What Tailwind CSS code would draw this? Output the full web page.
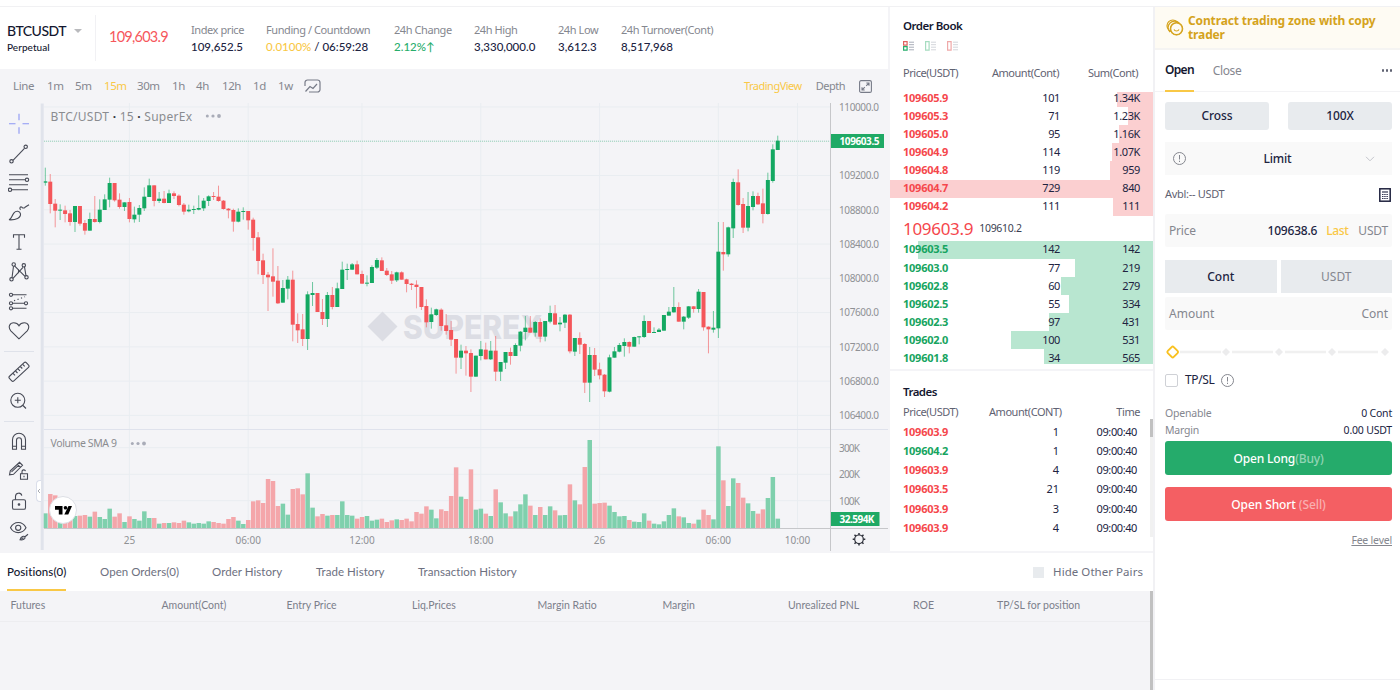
<!DOCTYPE html>
<html lang="en">
<head>
  <meta charset="UTF-8" />
  <title>BTCUSDT Perpetual</title>
  <script src="https://cdn.jsdelivr.net/npm/@tailwindcss/browser@4"></script>
</head>
<body class="w-[1400px] h-[690px] overflow-hidden bg-white flex flex-col font-['Noto_Sans',sans-serif] text-[#20233f]">

  <div class="h-[7px] shrink-0 border-b border-[#f1f1f3]"></div>

  <div class="flex h-[683px]">
    <!-- Left side: chart, order book, positions -->
    <div class="w-[1153px] shrink-0 flex flex-col">
      <div class="flex h-[546px] bg-[#f4f4f7] pb-[2px]">

        <!-- Chart column -->
        <section class="w-[888px] shrink-0 flex flex-col">
          <header class="h-[62px] bg-white flex font-[Lato,sans-serif] leading-none">
            <div class="w-[96px] mt-[8px] h-[46px] border-r border-[#f1f1f4] pl-[7px] pt-[9px]">
              <div class="flex items-center text-[14px] tracking-[-0.5px] whitespace-nowrap text-[#14172f] font-medium">BTCUSDT
                <span class="ml-[8px] border-x-4 border-x-transparent border-t-4 border-t-[#b9babd]"></span>
              </div>
              <div class="mt-[4px] text-[10px] tracking-[0.05px] text-[#14172f] font-medium">Perpetual</div>
            </div>
            <div class="w-[95px] pl-[13px] pt-[23px] text-[14.5px] tracking-[-0.75px] text-[#f6575c]">109,603.9</div>
            <div class="flex pt-[17px] text-[11.5px] whitespace-nowrap [&>div>p:first-child]:text-[#85878f] [&>div>p:first-child]:tracking-[-0.42px] [&>div>p:last-child]:mt-[6px] [&>div>p:last-child]:font-medium">
              <div class="w-[75px]"><p class="font-['Noto_Sans',sans-serif] text-[11px]">Index price</p><p>109,652.5</p></div>
              <div class="w-[128px]"><p class="font-['Noto_Sans',sans-serif] text-[11px]">Funding / Countdown</p><p><span class="text-[#f9c846]">0.0100%</span> / 06:59:28</p></div>
              <div class="w-[80px]"><p class="font-['Noto_Sans',sans-serif] text-[11px]">24h Change</p><p class="text-[#27ad6b]">2.12%↑</p></div>
              <div class="w-[84px]"><p class="font-['Noto_Sans',sans-serif] text-[11px]">24h High</p><p>3,330,000.0</p></div>
              <div class="w-[63px]"><p class="font-['Noto_Sans',sans-serif] text-[11px]">24h Low</p><p>3,612.3</p></div>
              <div><p class="font-['Noto_Sans',sans-serif] text-[11px]">24h Turnover(Cont)</p><p>8,517,968</p></div>
            </div>
          </header>

          <nav class="h-[34px] flex items-center text-[11.5px] tracking-[-0.4px] text-[#85878f] pl-[13px] pr-[16px]">
            <span class="w-[34px]">Line</span>
            <span class="w-[28px]">1m</span>
            <span class="w-[29px]">5m</span>
            <span class="w-[33px] text-[#f9c846]">15m</span>
            <span class="w-[35px]">30m</span>
            <span class="w-[24px]">1h</span>
            <span class="w-[26px]">4h</span>
            <span class="w-[31px]">12h</span>
            <span class="w-[25px]">1d</span>
            <span class="w-[26px]">1w</span>
            <svg class="w-[17px] h-[15px]" viewBox="0 0 17 15" fill="none" stroke="#777b88" stroke-width="1.2"><path d="M1 7V3.5A2.5 2.5 0 0 1 3.500 1h10A2.500 2.500 0 0 1 16 3.500v7a2.500 2.500 0 0 1-2.500 2.500H5M1.500 12.500l4.500-5 3 2 4-4.500"/></svg>
            <span class="ml-auto text-[11px] tracking-[-0.5px] text-[#f9c846]">TradingView</span>
            <span class="ml-[14px] text-[11px] tracking-[-0.5px]">Depth</span>
            <svg class="ml-[14px] w-[13px] h-[13px]" viewBox="0 0 13 13" fill="none" stroke="#777b88" stroke-width="1.100"><rect x=".6" y=".6" width="11.800" height="11.800" rx="1.500"/><path d="M7.200 5.800L10 3M7.300 3H10v2.700M5.800 7.200L3 10M3 7.300V10h2.700"/></svg>
          </nav>

          <div class="flex h-[448px]">
            <!-- Drawing tools -->
            <div class="relative w-[41px] shrink-0 flex flex-col items-center pt-[6px] pr-[3px] [&>svg]:h-[29.6px] [&>svg]:w-[22px] [&>svg]:shrink-0">
              <svg viewBox="0 0 22 22" fill="none" stroke="#8c96f5" stroke-width="1.100"><path d="M11 1v6.500M11 14.500V21M1 11h6.500M14.500 11H21"/></svg>
              <svg viewBox="0 0 22 22" fill="none" stroke="#474a56" stroke-width="1.100"><path d="M5 17.500L16.500 5.500"/><circle cx="3.500" cy="18.500" r="1.700"/><circle cx="17.700" cy="4" r="1.700"/></svg>
              <svg viewBox="0 0 22 22" fill="none" stroke="#474a56" stroke-width="1.100"><path d="M1 3h19M1 8h16M1 13h19M4 18h16"/><circle cx="19" cy="8" r="1.700"/><circle cx="2" cy="18" r="1.700"/></svg>
              <svg viewBox="0 0 22 22" fill="none" stroke="#474a56" stroke-width="1.100"><path d="M1 18c3-1 2.500-4 5-7 2-2.500 6-2 6.500 1C13 16 8 18.500 1 18zM12.500 8c-1.500-2 0-3.500 1.500-2.500 1 1 2 1 3 0L21 3"/></svg>
              <svg viewBox="0 0 22 22" fill="none" stroke="#474a56" stroke-width="1.100"><path d="M5.500 7V4h11v3M11 4v14.500M8.500 18.500h5"/></svg>
              <svg viewBox="0 0 22 22" fill="none" stroke="#474a56" stroke-width="1.100"><path d="M4 17L5.500 5.500M6.500 5l10.500 10.500M5 17.500L15 6.500M16.500 6L18 15M10.500 8.500v4"/><circle cx="3.500" cy="18.500" r="1.700"/><circle cx="5.700" cy="3.700" r="1.700"/><circle cx="15.800" cy="4.500" r="1.700"/><circle cx="18.500" cy="16.500" r="1.700"/></svg>
              <svg viewBox="0 0 22 22" fill="none" stroke="#474a56" stroke-width="1.100"><path d="M4.500 4H18.500M4.500 12.500H17M4.500 17.500H18.500"/><path d="M6 10L17 6" stroke-dasharray="1.200 2.500"/><circle cx="3" cy="4" r="1.600"/><circle cx="3" cy="12.500" r="1.600"/><circle cx="3" cy="17.500" r="1.600"/><circle cx="18" cy="12.500" r="1.600"/></svg>
              <svg viewBox="0 0 22 22" fill="none" stroke="#474a56" stroke-width="1.100"><path d="M11 19L2.800 11C-.5 7 2 3 5.700 3 8.500 3 10.300 4.800 11 6c.7-1.200 2.500-3 5.300-3C20 3 22.500 7 19.200 11z"/></svg>
              <div class="w-[30px] h-px shrink-0 bg-[#dfe2ea] mt-[5px] mb-[5px]"></div>
              <svg viewBox="0 0 22 22" fill="none" stroke="#474a56" stroke-width="1.100"><rect x="-.500" y="7.800" width="23" height="6.400" rx="1.500" transform="rotate(-43 11 11)"/><path d="M5 12.500l2 2M7.500 10.200l2 2M10 8l2 2M12.300 5.700l2 2M14.700 3.600l2 2"/></svg>
              <svg viewBox="0 0 22 22" fill="none" stroke="#474a56" stroke-width="1.100"><circle cx="9.800" cy="10.500" r="7"/><path d="M15 15.700l3 3M9.800 7.500v6M6.800 10.500h6"/></svg>
              <div class="w-[30px] h-px shrink-0 bg-[#dfe2ea] mt-[5px] mb-[5px]"></div>
              <svg viewBox="0 0 22 22" fill="none" stroke="#474a56" stroke-width="1.100"><path d="M4.500 18.500V9a6.500 6.500 0 0 1 13 0v9.500h-4V9.500a2.500 2.500 0 0 0-5 0v9zM4.500 15.500h4M13.500 15.500h4"/></svg>
              <svg viewBox="0 0 22 22" fill="none" stroke="#474a56" stroke-width="1.100"><path d="M1.500 14l.8-4L11.500 1.500l3 3L5.500 13.500zM9.500 3.500l3 3M3.500 11l7-6.500M12.500 13h7v5.500h-7zM14 13v-2a1.800 1.800 0 0 1 3.500-.7M16 15v1.500"/></svg>
              <svg viewBox="0 0 22 22" fill="none" stroke="#474a56" stroke-width="1.100"><rect x="4.500" y="10" width="13" height="9.500" rx="1.500"/><path d="M7.500 10V6.500a3.200 3.200 0 0 1 6.300-.7"/><circle cx="11" cy="14.700" r=".8" fill="#474a56"/></svg>
              <svg viewBox="0 0 22 22" fill="none" stroke="#474a56" stroke-width="1.100"><path d="M2.500 8C6 1 14.500 1 18 8 14.500 14.500 6 14.500 2.500 8z"/><circle cx="10.200" cy="8" r="2.600"/><path d="M12 20c1-3.500 4-4.500 5-2.500.5 1.500-2 3-5 2.500zM13.500 19l2-1M17 17l3-2.500"/></svg>
              <div class="absolute right-0 top-[377px] w-[5px] h-[22px] rounded-l border border-r-0 border-[#dadeea] bg-white flex items-center">
                <svg class="w-[4px] h-[6px]" viewBox="0 0 4 6" fill="none" stroke="#9598a1" stroke-width=".8"><path d="M3 1L1 3l2 2"/></svg>
              </div>
            </div>
            <!-- Candles and volume -->
            <svg id="chart" class="w-[847px] h-[448px] overflow-visible" viewBox="41 103 847 448" font-family="'Noto Sans', sans-serif"></svg>
          </div>
        </section>

        <!-- Order book and trades -->
        <section class="ml-[2px] w-[263px] flex flex-col gap-[2px]">
          <div class="h-[362px] bg-white">
            <h2 class="pl-[13px] pt-[11px] text-[11.5px] leading-[15px] tracking-[-0.5px] font-semibold text-[#14172f]">Order Book</h2>
            <div class="flex gap-[11px] pl-[13px] mt-[8px]">
              <svg class="w-[11px] h-[10px]" viewBox="0 0 11 10" fill="none"><path d="M.6.600h3.500v3.500H.6z" stroke="#e0615f" stroke-width="1.200"/><path d="M.6 5.600h3.500v3.500H.6z" stroke="#27ad6b" stroke-width="1.200"/><path d="M6 1.200h5M6 3.700h5M6 6.200h5M6 8.800h5" stroke="#a9adb8"/></svg>
              <svg class="w-[11px] h-[10px]" viewBox="0 0 11 10" fill="none"><path d="M.6.600h3.500v8.500H.6z" stroke="#a6dcc0" stroke-width="1.200"/><path d="M6 1.200h5M6 3.700h5M6 6.200h5M6 8.800h5" stroke="#d3d5db"/></svg>
              <svg class="w-[11px] h-[10px]" viewBox="0 0 11 10" fill="none"><path d="M.6.600h3.500v8.500H.6z" stroke="#efa9a9" stroke-width="1.200"/><path d="M6 1.200h5M6 3.700h5M6 6.200h5M6 8.800h5" stroke="#d3d5db"/></svg>
            </div>
            <div class="flex mt-[14px] h-[16px] items-center pl-[13px] text-[11px] tracking-[-0.45px] text-[#5f6272]">
              <span class="w-[86px]">Price(USDT)</span>
              <span class="w-[70px] text-right">Amount(Cont)</span>
              <span class="w-[79px] text-right">Sum(Cont)</span>
            </div>
            <div id="asks" class="mt-[11px] h-[123.700px] overflow-hidden flex flex-col justify-end"></div>
            <div class="flex items-center h-[25px] pt-[2px] pl-[13px]">
              <span class="text-[17px] tracking-[-0.3px] text-[#f5474c]">109603.9</span>
              <span class="ml-[6px] text-[10.5px] tracking-[-0.3px] text-[#3c3f52]">109610.2</span>
            </div>
            <div id="bids" class="h-[123px] overflow-hidden"></div>
          </div>
          <div class="relative h-[180px] bg-white">
            <h2 class="pl-[13px] pt-[13px] text-[11.5px] leading-[15px] tracking-[-0.55px] font-semibold text-[#14172f]">Trades</h2>
            <div class="flex mt-[5px] mb-[2.500px] h-[16px] items-center pl-[13px] text-[11px] tracking-[-0.45px] text-[#5f6272]">
              <span class="w-[86px]">Price(USDT)</span>
              <span class="w-[71px] whitespace-nowrap text-right">Amount(CONT)</span>
              <span class="w-[80px] text-right">Time</span>
            </div>
            <div id="trades"></div>
            <div class="absolute right-0 top-[48px] w-[3px] h-[118px] bg-[#f1f1f1]"><div class="h-[18px] bg-[#c1c1c1]"></div></div>
          </div>
        </section>
      </div>

      <!-- Positions -->
      <section class="flex-1 flex flex-col bg-[#f4f4f7] font-[Lato,sans-serif]">
        <div class="h-[38px] bg-white flex items-center pl-[7px] pr-[10px] text-[11.5px] text-[#6d7080] whitespace-nowrap">
          <span class="w-[93px] h-full"><span class="inline-flex items-center h-full pt-[2px] border-b-2 border-[#f9c846] font-medium tracking-[0.05px] text-[#14172f]">Positions(0)</span></span>
          <span class="w-[112px] tracking-[0.05px]">Open Orders(0)</span>
          <span class="w-[104px] tracking-[0.05px]">Order History</span>
          <span class="w-[102px] tracking-[0.05px]">Trade History</span>
          <span class="tracking-[0.05px]">Transaction History</span>
          <span class="ml-auto w-[11px] h-[11px] bg-[#e8ebee]"></span>
          <span class="ml-[9px] font-['Noto_Sans',sans-serif] tracking-[0.05px]">Hide Other Pairs</span>
        </div>
        <div class="flex flex-1">
          <div class="flex-1">
            <div class="h-[31px] flex items-center pl-[10.500px] border-b border-[#ededf0] text-[10.5px] text-[#7c7f8b] whitespace-nowrap">
              <span class="w-[151px]">Futures</span>
              <span class="w-[125px]">Amount(Cont)</span>
              <span class="w-[125.500px]">Entry Price</span>
              <span class="w-[125.500px]">Liq.Prices</span>
              <span class="w-[125px]">Margin Ratio</span>
              <span class="w-[125.500px]">Margin</span>
              <span class="w-[125px]">Unrealized PNL</span>
              <span class="w-[84px]">ROE</span>
              <span>TP/SL for position</span>
            </div>
          </div>
          <div class="w-[3px] bg-[#c1c1c1]"></div>
        </div>
      </section>
    </div>

    <!-- Order form -->
    <aside class="w-[247px] border-l-2 border-[#f1f1f4] flex flex-col">
      <div class="h-[43px] bg-[#fefbf3] border-b-2 border-[#f5f4f2] flex items-center pl-[11px] text-[#d5a31c]">
        <svg class="w-[18px] h-[17px] shrink-0" viewBox="0 0 18 17" fill="none" stroke="#d5a31c" stroke-width="1.200"><path d="M4 13.200A6.200 6.200 0 1 1 13.200 4"/><circle cx="10.500" cy="9.800" r="6.200"/><circle cx="6.800" cy="6.800" r="5.800"/><circle cx="10.500" cy="9.800" r="5.800" fill="#fefbf3"/><path d="M8 10.500c1 2 4 2 5 0"/></svg>
        <p class="ml-[4px] text-[12px] leading-[14px] tracking-[-0.13px] font-bold">Contract trading zone with copy trader</p>
      </div>
      <div class="h-[42px] flex items-stretch pl-[10px] pr-[8px] border-b border-[#f3f3f5] text-[12px]">
        <span class="flex items-center border-b-2 border-[#f9c846] -mb-px tracking-[-0.7px] font-semibold text-[#14172f]">Open</span>
        <span class="ml-[19px] flex items-center tracking-[-0.4px] text-[#85878f]">Close</span>
        <span class="ml-auto flex items-center gap-[1.500px] [&>i]:w-[2.500px] [&>i]:h-[2.500px] [&>i]:rounded-full [&>i]:bg-[#5f6272]"><i></i><i></i><i></i></span>
      </div>
      <div class="pl-[10px] pr-[8px] flex flex-col">
        <div class="mt-[10px] flex justify-between h-[28px] text-[12px] font-medium">
          <div class="w-[104px] rounded-[3px] bg-[#e8ebee] flex items-center justify-center tracking-[-0.1px]">Cross</div>
          <div class="w-[104px] rounded-[3px] bg-[#e8ebee] flex items-center justify-center tracking-[-0.1px]">100X</div>
        </div>
        <div class="mt-[12px] h-[33px] bg-[#f9f9f9] flex items-center pl-[8px] pr-[17px] text-[12px] font-medium">
          <svg class="w-[13px] h-[13px]" viewBox="0 0 13 13" fill="none" stroke="#85878f" stroke-width="1"><circle cx="6.500" cy="6.500" r="6"/><path d="M6.500 3v4.500M6.500 8.700v1.300"/></svg>
          <span class="flex-1 text-center pl-[4px] tracking-[-0.2px]">Limit</span>
          <svg class="w-[10px] h-[6px]" viewBox="0 0 10 6" fill="none" stroke="#c3c5cb"><path d="M1 .8l4 4 4-4"/></svg>
        </div>
        <div class="h-[39px] flex items-center justify-between text-[11px] tracking-[-0.3px] text-[#5f6272]">
          <span>Avbl:-- USDT</span>
          <svg class="mr-px w-[12px] h-[14px]" viewBox="0 0 12 14" fill="none" stroke="#20233f"><rect x=".8" y=".8" width="10.400" height="12.400" stroke-width="1.500"/><path d="M3 4h6" stroke-width="1.100"/><path d="M3 6.500h6M3 8.500h6M3 10.500h6" stroke-width=".9" stroke-dasharray="1.500 .7"/></svg>
        </div>
        <div class="h-[33px] rounded-[2px] bg-[#f9f9f9] flex items-center px-[4px] text-[12px] tracking-[-0.2px] text-[#85878f]">
          <span>Price</span>
          <span class="ml-auto text-[#20233f] font-medium">109638.6</span>
          <span class="ml-[9px] tracking-[-0.4px] font-medium text-[#f9c846]">Last</span>
          <span class="ml-[10px]">USDT</span>
        </div>
        <div class="mt-[13px] h-[33px] flex gap-[4px] text-[12px]">
          <div class="flex-1 bg-[#e8ebee] flex items-center justify-center font-medium">Cont</div>
          <div class="flex-1 bg-[#e8ebee] flex items-center justify-center text-[#85878f]">USDT</div>
        </div>
        <div class="mt-[4px] h-[33px] rounded-[2px] bg-[#f9f9f9] flex items-center justify-between px-[4px] text-[12px] text-[#85878f]">
          <span>Amount</span><span>Cont</span>
        </div>
        <svg class="mt-[14px] w-[227px] h-[16px]" viewBox="0 0 227 16" fill="none">
          <path d="M15 8h41M67 8h41M120 8h41M173 8h40" stroke="#f0f0f0" stroke-width="2.500"/>
          <path d="M61 4l4 4-4 4-4-4zM114 4l4 4-4 4-4-4zM167 4l4 4-4 4-4-4zM220 4l4 4-4 4-4-4z" fill="#ececed"/>
          <rect x="3.500" y="3.800" width="8.400" height="8.400" rx="1.500" transform="rotate(45 7.700 8)" stroke="#f9c120" stroke-width="1.900"/>
        </svg>
        <div class="mt-[11px] h-[18px] flex items-center text-[12px] tracking-[-0.4px]">
          <span class="w-[13px] h-[13px] border border-[#cfd1d6] rounded-[2px]"></span>
          <span class="ml-[7px]">TP/SL</span>
          <svg class="ml-[7px] w-[13px] h-[13px]" viewBox="0 0 13 13" fill="none" stroke="#85878f" stroke-width="1"><circle cx="6.500" cy="6.500" r="6"/><path d="M6.500 3v4.500M6.500 8.700v1.300"/></svg>
        </div>
        <div class="mt-[16px] text-[10.5px] leading-[16.500px] tracking-[-0.2px] text-[#85878f]">
          <div class="flex justify-between"><span>Openable</span><span class="text-[#20233f]">0 Cont</span></div>
          <div class="flex justify-between"><span>Margin</span><span class="text-[#20233f]">0.00 USDT</span></div>
        </div>
        <div class="mt-[3px] h-[34px] rounded-[3px] bg-[#25ab6b] flex items-center justify-center pt-px text-[12px] tracking-[-0.15px] font-medium text-white">Open Long<span class="text-white/50">(Buy)</span></div>
        <div class="mt-[12px] h-[34px] rounded-[3px] bg-[#f45f63] flex items-center justify-center pt-px text-[12px] tracking-[-0.1px] font-medium text-white">Open Short&nbsp;<span class="text-white/50">(Sell)</span></div>
        <div class="mt-[12px] text-right text-[10.5px] tracking-[-0.2px] text-[#85878f] underline">Fee level</div>
      </div>
      <div class="mt-auto mb-[10px] h-px bg-[#f1f1f4]"></div>
    </aside>
  </div>

  <script>
    // price, amount, sum, depth bar width
    const asks = [
      ['109605.9', '101', '1.34K', 36],
      ['109605.3', '71', '1.23K', 25],
      ['109605.0', '95', '1.16K', 34],
      ['109604.9', '114', '1.07K', 41],
      ['109604.8', '119', '959', 43],
      ['109604.7', '729', '840', 263],
      ['109604.2', '111', '111', 40]
    ];
    const bids = [
      ['109603.5', '142', '142', 235],
      ['109603.0', '77', '219', 78],
      ['109602.8', '60', '279', 92],
      ['109602.5', '55', '334', 84],
      ['109602.3', '97', '431', 104],
      ['109602.0', '100', '531', 142],
      ['109601.8', '34', '565', 109]
    ];
    const trades = [
      ['109603.9', '1', 'text-[#f5474c]'],
      ['109604.2', '1', 'text-[#16a460]'],
      ['109603.9', '4', 'text-[#f5474c]'],
      ['109603.5', '21', 'text-[#f5474c]'],
      ['109603.9', '3', 'text-[#f5474c]'],
      ['109603.9', '4', 'text-[#f5474c]']
    ];

    function bookRows(rows, color, bar) {
      return rows.map(r => `
        <div class="relative h-[18.1px] shrink-0 flex items-center pl-[13px] text-[11px]">
          <div class="absolute right-0 inset-y-0 ${bar}" style="width:${r[3]}px"></div>
          <span class="relative w-[86px] font-bold tracking-[-0.25px] ${color}">${r[0]}</span>
          <span class="relative w-[71px] text-right tracking-[-0.4px]">${r[1]}</span>
          <span class="relative w-[80px] text-right tracking-[-0.4px]">${r[2]}</span>
        </div>`).join('');
    }
    document.getElementById('asks').innerHTML = bookRows(asks, 'text-[#f5474c]', 'bg-[#fbcfd0]');
    document.getElementById('bids').innerHTML = bookRows(bids, 'text-[#16a460]', 'bg-[#b8e6d0]');
    document.getElementById('trades').innerHTML = trades.map(t => `
      <div class="h-[19.2px] flex items-center pl-[13px] text-[11px]">
        <span class="w-[86px] font-bold tracking-[-0.25px] ${t[2]}">${t[0]}</span>
        <span class="w-[70px] text-right">${t[1]}</span>
        <span class="w-[78px] text-right tracking-[-0.4px]">09:00:40</span>
      </div>`).join('');

    // candles: side, body top, body bottom, high, low (thirds of a pixel below the block's own top)
    const blocks = [
      [100, 'g 244 248 203 257|r 245 312 222 340|r 311 332 297 382|g 329 331 313 360|r 331 342 317 367|r 340 366 330 377|g 318 366 318 396|r 318 371 318 377|r 369 392 360 404|g 357 392 338 392|r 357 366 288 368|g 329 366 298 370|g 298 330 283 330|g 249 299 233 322|r 249 301 249 305|r 299 321 280 326|g 307 321 307 333|r 306 357 294 367|g 344 358 320 368|g 324 344 315 366|g 290 325 262 333|g 256 291 236 291|r 256 303 256 319|g 296 303 276 309|r 296 309 273 310|g 280 309 269 309|r 280 288 274 297|r 287 315 283 319|r 314 335 309 344|g 329 334 314 337|g 327 329 317 342|g 324 329 286 331|g 302 325 294 333|g 289 303 286 318|r 288 291 276 300|r 290 303 257 305|r 302 327 300 329|r 326 331 324 355'],
      [150, 'r 180 215 176 245|g 185 215 175 217|g 183 186 172 209|r 183 211 183 239|r 209 264 203 302|r 262 333 246 373|r 331 375 311 402|r 374 382 366 483|r 379 395 295 440|r 392 460 348 462|g 414 458 390 458|g 389 416 378 448|r 389 524 362 574|r 522 541 490 579|r 538 567 492 588|g 433 567 424 600|g 429 435 396 468|r 429 486 429 486|r 486 507 447 525|g 435 507 426 531|r 435 471 411 478|g 415 471 398 471|g 359 417 335 417|g 357 360 341 390|g 343 359 339 360|r 343 373 332 373|r 372 401 362 402|g 398 401 376 409|g 351 399 346 399|g 330 353 324 357|r 331 363 322 363|r 362 375 354 378|r 373 392 363 402|g 367 391 365 396|r 367 389 364 389|r 388 402 386 427|r 401 405 399 420|r 404 411 391 475|r 411 471 411 480|r 468 517 448 532|g 493 516 473 536'],
      [240, 'g 208 225 206 228|r 209 258 205 272|r 256 273 222 284|r 270 299 243 318|r 297 353 297 401|g 332 353 314 387|r 332 340 318 407|r 339 410 328 456|g 347 410 347 410|g 328 348 303 361|r 329 358 308 358|g 332 358 303 360|r 332 395 288 423|g 366 395 366 423|g 336 368 336 387|r 336 348 323 374|g 315 348 310 348|g 275 317 273 334|g 263 276 228 301|r 263 278 228 278|g 246 278 243 290|r 246 290 235 307|g 243 290 243 304|g 219 245 197 250|r 220 254 195 254|g 248 253 231 274|g 224 248 222 264|r 224 334 222 340|g 294 335 294 348|r 294 314 277 342|r 312 428 309 459|g 345 428 321 486|r 345 389 324 408|r 388 406 368 418|r 404 454 402 471|g 352 455 344 457|g 334 353 321 353|g 315 335 309 337|g 306 318 295 350|r 306 320 304 340|g 291 320 290 320|g 289 292 288 313|g 243 291 226 294|r 243 279 243 279|g 276 279 262 279'],
      [120, 'g 629 636 624 636|g 585 632 585 632|g 575 587 561 587|g 561 577 501 578|r 561 605 547 605|g 590 605 588 628|g 559 593 558 597|r 559 567 558 578|g 515 567 507 578|r 516 622 516 632|r 620 628 619 700|g 623 629 573 638|g 395 625 306 654|r 396 403 306 452|g 322 403 320 410|g 186 325 176 354|r 187 255 148 257|r 252 323 234 339|g 258 323 216 334|g 228 261 214 271|r 228 253 218 255|r 250 282 206 310|g 180 282 158 284|g 88 183 73 188|g 62 90 47 90']
    ];
    const volumes = [44,102,98,24,24,24,36,37,39,34,49,33,27,58,34,44,18,35,27,22,50,30,30,13,15,15,17,15,22,17,13,15,13,20,18,15,13,27,
      33,22,12,24,80,83,75,147,141,66,73,40,117,119,101,164,61,35,42,37,39,39,80,39,37,28,33,36,22,25,28,18,23,26,24,28,20,48,43,65,55,
      29,56,51,96,182,94,87,176,55,58,43,36,116,77,44,35,50,71,101,67,39,63,39,65,53,38,39,131,83,71,183,264,73,75,76,67,48,35,36,24,19,18,44,22,13,
      11,20,39,59,35,32,15,13,25,55,39,26,245,143,66,149,135,91,74,51,43,56,90,153,28];

    const X0 = 45.3, STEP = 4.949, BASE = 528;
    const times = [[129.4, '25'], [248.2, '06:00'], [362, '12:00'], [480.8, '18:00'], [599.6, '26'], [718.3, '06:00'], [797.5, '10:00']];
    let out = '';

    // grid
    times.forEach(([x, label]) => {
      out += `<path d="M${x} 103V528" stroke="#e9edf1"/><text x="${x}" y="543.500" font-size="10" text-anchor="middle" fill="#8f9195">${label}</text>`;
    });
    for (let i = 0; i < 10; i++) {
      const y = 107 + i * 34.26;
      out += `<path d="M44 ${y}H830" stroke="#e9edf1"/>`;
      if (i !== 1) out += `<text x="839" y="${y + 3.8}" font-size="10" textLength="40" fill="#8f9195">${110000 - i * 400}.0</text>`;
    }
    [[447.7, '300K'], [474.3, '200K'], [500.7, '100K']].forEach(([y, label]) => {
      out += `<path d="M44 ${y}H830" stroke="#e9edf1"/><text x="839" y="${y + 3.8}" font-size="10" textLength="21" fill="#8f9195">${label}</text>`;
    });

    // watermark, behind the bars
    out += `<g fill="#dcdde4"><path d="M382.500 311.500l15 15-15 15-15-15z"/><text x="403" y="338.500" font-size="32" font-weight="800" font-family="Inter, sans-serif" textLength="140" lengthAdjust="spacingAndGlyphs">SUPEREX</text></g>`;

    // bars
    let i = 0, bars = '', vols = '';
    blocks.forEach(([top, rows]) => rows.split('|').forEach(row => {
      const [side, ...v] = row.split(' ');
      const [a, b, hi, lo] = v.map(n => top + n / 3);
      const x = X0 + i * STEP;
      const c = side === 'g' ? '#14a862' : '#f4565a';
      const h = volumes[i] / 3;
      bars += `<path d="M${x} ${hi}V${lo}" stroke="${c}" stroke-opacity=".6" stroke-width="1"/><rect x="${x - 2}" y="${a}" width="4" height="${Math.max(b - a, 1)}" fill="${c}"/>`;
      vols += `<rect x="${x - 2.2}" y="${BASE - h}" width="4.500" height="${h}" fill="${side === 'g' ? '#7fd0ad' : '#f4a6aa'}"/>`;
      i++;
    }));
    out += `<path d="M44 141.200H830" stroke="#14a862" stroke-opacity=".4" stroke-dasharray="1 1"/>` + vols + bars;

    // frame
    out += `<path d="M42.200 103.500V550" stroke="#e0e3eb" stroke-width="3"/>
      <path d="M44 429.500H888" stroke="#dfe2ec"/>
      <path d="M830.500 103V551M44 528.500H888" stroke="#c6c7ca"/>`;

    // legends
    out += `<text x="50.500" y="121.300" font-size="12" textLength="141.500" fill="#8a8c90">BTC/USDT <tspan fill="#33363f" font-weight="700">·</tspan> 15 <tspan fill="#33363f" font-weight="700">·</tspan> SuperEx</text>
      <g fill="#a9acb8"><circle cx="207.300" cy="116" r="1.500"/><circle cx="213" cy="116" r="1.600"/><circle cx="219" cy="116" r="1.900"/>
      <circle cx="132.300" cy="443.500" r="1.500"/><circle cx="138" cy="443.500" r="1.600"/><circle cx="144" cy="443.500" r="1.900"/></g>
      <text x="50.500" y="447" font-size="10.5" textLength="66.500" fill="#8a8c90">Volume SMA 9</text>`;

    // price tags
    out += `<rect x="831" y="134" width="53" height="14" fill="#1fa965"/><text x="839.500" y="145" font-size="10" font-weight="700" textLength="40" fill="#fff">109603.5</text>
      <rect x="831" y="512" width="48.500" height="14" fill="#1fa965"/><text x="839.500" y="522.700" font-size="10" font-weight="700" textLength="35" fill="#fff">32.594K</text>`;

    // TradingView badge
    out += `<circle cx="63" cy="510" r="13.500" fill="#fff" stroke="#dddfe5"/>
      <path d="M55 506h7.500v8.500h-3.700v-4.800H55zM68.500 506H72l-3.700 8.500h-4z" fill="#000"/><circle cx="65.500" cy="507.800" r="1.800" fill="#000"/>`;

    // settings gear
    out += `<g fill="none" stroke="#2f323c"><circle cx="859" cy="539.300" r="4.300" stroke-width="1.200"/>
      <path d="M859 535v-2M859 543.600v2M854.700 539.300h-2M863.300 539.300h2M856 536.300l-1.500-1.500M862 542.300l1.500 1.500M856 542.300l-1.500 1.500M862 536.300l1.500-1.500" stroke-width="1.500"/></g>`;

    document.getElementById('chart').innerHTML = out;
  </script>
</body>
</html>
